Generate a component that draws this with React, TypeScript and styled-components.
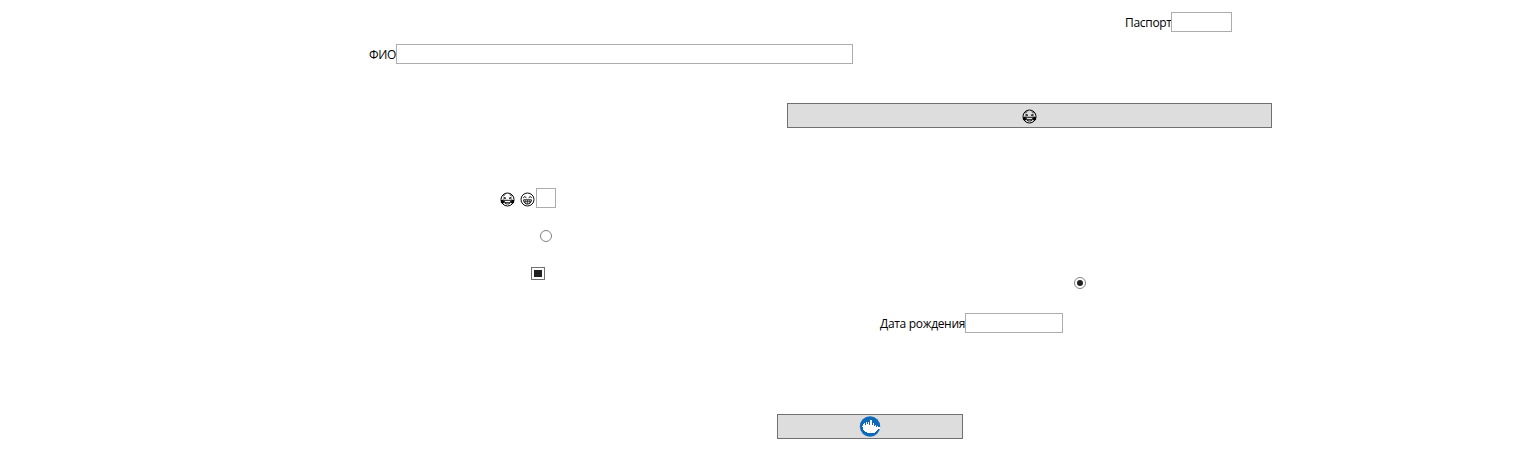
import React from "react";
import styled, { createGlobalStyle } from "styled-components";

const GlobalStyle = createGlobalStyle`
  * { box-sizing: border-box; }
  body { margin: 0; background: #fff; }
`;

const Form = styled.main`
  display: flex;
  flex-direction: column;
  align-items: flex-start;
  width: 1513px;
  height: 472px;
  padding-top: 12px;
  overflow: hidden;
  font: 12px/16px "Open Sans", "Noto Sans", sans-serif;
  color: #000;
`;

const Row = styled.div<{ $left: number; $top?: number; $height: number }>`
  display: flex;
  align-items: center;
  flex: none;
  height: ${(p) => p.$height}px;
  margin-top: ${(p) => p.$top ?? 0}px;
  margin-left: ${(p) => p.$left}px;
`;

const Label = styled.label<{ $width: number; $spacing?: number }>`
  flex: none;
  width: ${(p) => p.$width}px;
  padding-top: 1px;
  letter-spacing: ${(p) => p.$spacing ?? 0}px;
  white-space: nowrap;
`;

const EmojiLabel = styled.span`
  display: flex;
  flex: none;
  gap: 5px;
  width: 36px;
  padding-top: 2px;
`;

const TextBox = styled.input<{ $width: number }>`
  flex: none;
  width: ${(p) => p.$width}px;
  height: 20px;
  padding: 0 2px;
  border: 1px solid #abadb3;
  border-radius: 0;
  background: #fff;
  font: inherit;
  outline: none;
`;

const Button = styled.button<{ $width: number; $offset?: number }>`
  display: flex;
  align-items: center;
  justify-content: center;
  width: ${(p) => p.$width}px;
  height: 25px;
  padding: ${(p) => p.$offset ?? 0}px 0 0;
  border: 1px solid #707070;
  border-radius: 0;
  background: #ddd;
`;

const CheckBox = styled.span`
  display: flex;
  justify-content: center;
  width: 14px;
  height: 13px;
  padding: 2px;
  border: 1px solid #707070;
  background: #fff;

  &::before {
    content: "";
    width: 8px;
    height: 7px;
    background: #212121;
  }
`;

const Icon = styled.svg`
  display: block;
  flex: none;
`;

const Radio = ({ checked = false }: { checked?: boolean }) => (
  <Icon width="12" height="12" viewBox="0 0 12 12">
    <circle cx="6" cy="6" r="5.5" fill="#fff" stroke="#808080" />
    {checked && <circle cx="6" cy="6" r="3" fill="#212121" />}
  </Icon>
);

const TearsFace = () => (
  <Icon width="15" height="15" viewBox="0 0 15 15" fill="none" stroke="#000">
    <circle cx="7.5" cy="7.5" r="6.5" strokeWidth="1" />
    <path d="M3.4 3.6l2-.9M11.6 3.6l-2-.9M3.3 5l2.6 1.2-2.6.8M11.7 5L9.1 6.2l2.6.8" strokeWidth=".8" />
    <path d="M.8 8.2L3.6 7.6l.5 2.8-1.2 1.5L1 10.7zM14.2 8.2l-2.8-.6-.5 2.8 1.2 1.5 1.9-1.2z" fill="#000" stroke="none" />
    <path d="M4.2 8.3h6.6c0 2.6-1.2 3.7-3.3 3.7s-3.3-1.1-3.3-3.7z" strokeWidth=".9" />
    <path d="M4.8 10.6h5.4" strokeWidth=".8" />
  </Icon>
);

const GrinFace = () => (
  <Icon width="15" height="15" viewBox="0 0 15 15" fill="none" stroke="#000">
    <circle cx="7.5" cy="7.5" r="6.5" strokeWidth=".95" />
    <path d="M3.2 5.8q1.6-2.4 3.2 0M8.6 5.8q1.6-2.4 3.2 0" strokeWidth=".95" />
    <path d="M3.6 7.8h7.8c0 2.6-1.6 4.3-3.9 4.3S3.6 10.4 3.6 7.8z" strokeWidth=".9" />
    <path d="M4 9.6h7M5.7 8v3.5M7.5 8v4M9.3 8v3.5" strokeWidth=".6" />
  </Icon>
);

const Logo = () => (
  <Icon width="22" height="21" viewBox="0 0 22 21" shapeRendering="crispEdges">
    <circle cx="11" cy="10.5" r="10.2" fill="#0e6ab8" shapeRendering="auto" />
    <path
      d="M3 10h1V8h1V7h1v2h1V6h1v2h1V6h1v3h1V4h2v5h1V7h1v3h1V9h1v2h1v-1h1v1h2v2h-2c-.8 2.8-3.3 4.5-7 4.5-4.6 0-8-2.5-8-6z"
      fill="#fff"
    />
  </Icon>
);

export default function App() {
  return (
    <>
      <GlobalStyle />
      <Form>
        <Row $left={1125} $height={20}>
          <Label $width={46} $spacing={-0.3} htmlFor="passport">Паспорт</Label>
          <TextBox id="passport" $width={61} />
        </Row>
        <Row $left={369} $top={12} $height={20}>
          <Label $width={27} $spacing={-0.4} htmlFor="name">ФИО</Label>
          <TextBox id="name" $width={457} />
        </Row>
        <Row $left={787} $top={39} $height={25}>
          <Button $width={485} $offset={2}><TearsFace /></Button>
        </Row>
        <Row $left={500} $top={60} $height={20}>
          <EmojiLabel><TearsFace /><GrinFace /></EmojiLabel>
          <TextBox $width={20} />
        </Row>
        <Row $left={540} $top={22} $height={12}>
          <Radio />
        </Row>
        <Row $left={531} $top={25} $height={13}>
          <CheckBox />
        </Row>
        <Row $left={1074} $top={-3} $height={12}>
          <Radio checked />
        </Row>
        <Row $left={880} $top={24} $height={20}>
          <Label $width={85} $spacing={-0.32} htmlFor="birth">Дата рождения</Label>
          <TextBox id="birth" $width={98} />
        </Row>
        <Row $left={777} $top={81} $height={25}>
          <Button $width={186}><Logo /></Button>
        </Row>
      </Form>
    </>
  );
}
